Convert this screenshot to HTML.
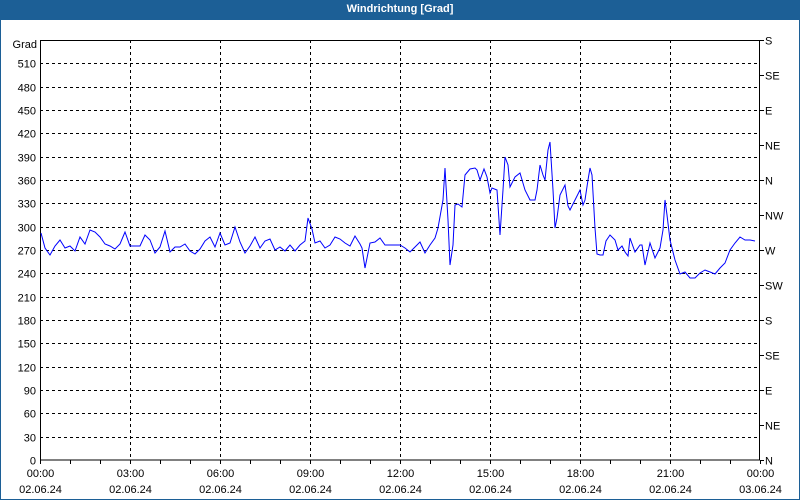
<!DOCTYPE html>
<html><head><style>
body{margin:0;width:800px;height:500px;overflow:hidden;background:#fff;font-family:"Liberation Sans",sans-serif}
#t{position:absolute;left:0;top:0;width:800px;height:20px;background:#1c5f96;color:#fff;font-weight:bold;font-size:11px;text-align:center;line-height:19px}
#f{position:absolute;left:0;top:20px;width:798px;height:479px;border:1px solid #1c5f96;border-top:none}
svg{position:absolute;left:0;top:0}
text{font-size:11px;fill:#000;font-family:"Liberation Sans",sans-serif}
</style></head><body>
<div id="t">Windrichtung [Grad]</div><div id="f"></div>
<svg width="800" height="500" id="s"></svg>
<script>
var s='';
var labs=['S','SE','E','NE','N','NW','W','SW','S','SE','E','NE','N'];
for(var k=0;k<=18;k++){var y=460-k*420/18;y=Math.round(y)+0.5;
 if(k>0&&k<18)s+='<line x1="40" x2="760" y1="'+y+'" y2="'+y+'" stroke="#000" stroke-dasharray="3,3"/>';
 if(k<18)s+='<text x="36" y="'+(y+4)+'" text-anchor="end">'+(k*30)+'</text>';}
s+='<text x="37" y="48" text-anchor="end">Grad</text>';
for(var i=0;i<13;i++){var y=40+i*35+0.5;s+='<line x1="760" x2="764" y1="'+y+'" y2="'+y+'" stroke="#000"/><text x="765" y="'+(y+4)+'">'+labs[i]+'</text>';}
for(var h=0;h<=24;h++){var x=40+h*30+0.5;s+='<line x1="'+x+'" x2="'+x+'" y1="460" y2="464" stroke="#000"/>';
 if(h%3==0){if(h>0&&h<24)s+='<line x1="'+x+'" x2="'+x+'" y1="40" y2="460" stroke="#000" stroke-dasharray="3,3"/>';
 var hh=(h%24<10?'0':'')+(h%24)+':00';s+='<text x="'+(x)+'" y="477" text-anchor="middle">'+hh+'</text><text x="'+x+'" y="493" text-anchor="middle">'+(h==24?'03.06.24':'02.06.24')+'</text>';}}
s+='<rect x="40.5" y="40.5" width="719" height="419.5" fill="none" stroke="#000"/>';
var p="41,233 45,248 50,255 55,246 60,240 65,248 70,246 75,251 80,237 85,244 90,230 95,232 100,237 105,244 110,246 115,249 120,244 125,232 130,246 140,246 145,235 150,240 155,253 160,247 165,231 170,252 175,247 180,247 185,244 190,251 195,254 200,249 205,241 210,237 215,247 220,233 225,245 230,243 235,227 240,242 245,253 250,246 255,237 260,248 265,241 270,239 275,250 280,247 285,251 290,245 295,251 300,245 305,241 308,218 312,229 315,243 320,241 325,248 330,245 335,237 340,239 345,243 350,246 355,236 360,244 362,248 365,268 370,243 375,242 380,238 385,245 400,245 405,248 410,252 415,247 420,242 425,253 430,245 435,238 438,228 443,200 445,168 448,220 450,265 453,245 455,205 458,204 462,207 465,175 470,169 475,168 477,170 480,180 484,169 487,177 490,193 492,188 497,190 500,235 503,190 505,157 508,165 510,187 515,177 520,173 525,190 530,200 535,200 537,190 540,165 543,175 545,180 548,150 550,142 553,190 555,228 557,218 560,195 565,185 568,206 570,210 575,200 580,190 583,205 585,200 588,180 590,168 592,175 595,228 597,254 600,255 603,255 606,241 610,235 615,240 618,250 622,246 625,252 628,256 630,238 635,252 640,245 642,245 645,265 650,243 655,258 660,248 663,230 665,200 667,215 670,240 675,260 680,274 685,272 690,278 695,278 700,273 705,270 710,272 715,274 720,268 725,263 730,250 735,243 740,237 745,240 750,240 755,241";
s+='<polyline points="'+p+'" fill="none" stroke="#0000ff" stroke-width="1"/>';
document.getElementById('s').innerHTML=s;
</script>
</body></html>
